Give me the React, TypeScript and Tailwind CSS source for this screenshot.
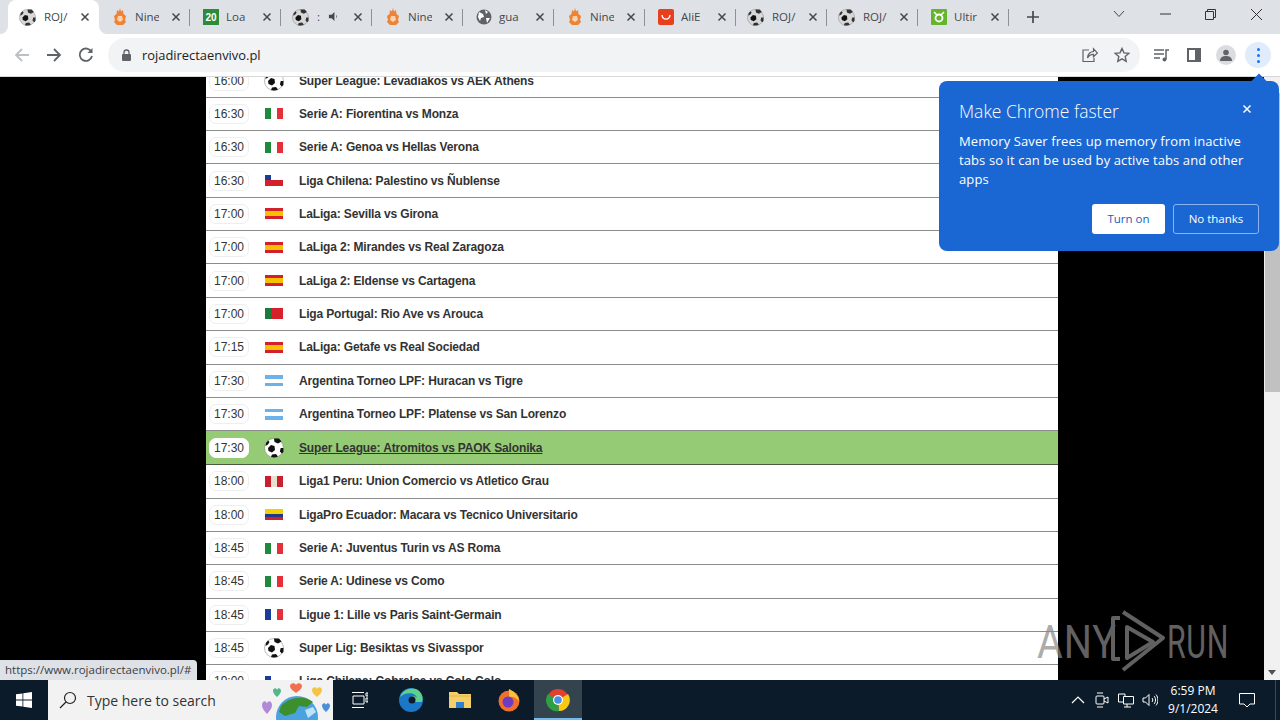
import React from "react";

const Ball = ({ s = 16, dark = false }: { s?: number; dark?: boolean }) => (
  <svg width={s} height={s} viewBox="0 0 20 20" className="shrink-0">
    <circle cx="10" cy="10" r="9.5" fill={dark ? "#d8d8d8" : "#fff"} stroke="#777" strokeWidth="0.5" />
    <path d="M4 10l3-3 3.500 1 .5 4-3 2.500-3.500-1.500z" fill="#111" />
    <path d="M10 .6l5 0 2.500 3-3.500 2-3.500-1.500zM2 5l2-2.500 1.500 1.500-1.500 2.500-2.500 1.500zM19.400 10v4l-1.500 1.500-2-2 .8-3.500zM7 19l1-2.500 4 -.5 2 2.500a9.500 9.500 0 0 1-7 .5z" fill={dark ? "#333" : "#111"} />
  </svg>
);

const Flag = ({ c }: { c: string }) => {
  const base = "w-[18px] h-[11px] shrink-0 overflow-hidden flex";
  if (c === "it") return <div className={base}><div className="flex-1 bg-[#1d8a3c]" /><div className="flex-1 bg-white" /><div className="flex-1 bg-[#e5303a]" /></div>;
  if (c === "es") return <div className={base + " flex-col"}><div className="h-[3px] bg-[#d4202a]" /><div className="flex-1 bg-[#f7c000]" /><div className="h-[3px] bg-[#d4202a]" /></div>;
  if (c === "fr") return <div className={base}><div className="flex-1 bg-[#1a3d9c]" /><div className="flex-1 bg-white" /><div className="flex-1 bg-[#e5303a]" /></div>;
  if (c === "pe") return <div className={base}><div className="flex-1 bg-[#c8202c]" /><div className="flex-1 bg-[#e8e0d0]" /><div className="flex-1 bg-[#c8202c]" /></div>;
  if (c === "ar") return <div className={base + " flex-col"}><div className="flex-1 bg-[#6cb2ea]" /><div className="flex-1 bg-white" /><div className="flex-1 bg-[#6cb2ea]" /></div>;
  if (c === "ec") return <div className={base + " flex-col"}><div className="h-[5px] bg-[#f5d000]" /><div className="h-[3px] bg-[#20388c]" /><div className="h-[3px] bg-[#d0202c]" /></div>;
  if (c === "pt") return <div className={base}><div className="w-[7px] bg-[#1a7a3c]" /><div className="flex-1 bg-[#d8202c]" /></div>;
  if (c === "cl") return (
    <div className={base + " flex-col relative"}>
      <div className="h-[5px] bg-white" /><div className="flex-1 bg-[#d4202a]" />
      <div className="absolute left-0 top-0 w-[6px] h-[5px] bg-[#1a3d9c]" />
    </div>
  );
  return <Ball s={20} />;
};

const rows: [string, string, string][] = [
  ["16:00", "b", "Super League: Levadiakos vs AEK Athens"],
  ["16:30", "it", "Serie A: Fiorentina vs Monza"],
  ["16:30", "it", "Serie A: Genoa vs Hellas Verona"],
  ["16:30", "cl", "Liga Chilena: Palestino vs Ñublense"],
  ["17:00", "es", "LaLiga: Sevilla vs Girona"],
  ["17:00", "es", "LaLiga 2: Mirandes vs Real Zaragoza"],
  ["17:00", "es", "LaLiga 2: Eldense vs Cartagena"],
  ["17:00", "pt", "Liga Portugal: Rio Ave vs Arouca"],
  ["17:15", "es", "LaLiga: Getafe vs Real Sociedad"],
  ["17:30", "ar", "Argentina Torneo LPF: Huracan vs Tigre"],
  ["17:30", "ar", "Argentina Torneo LPF: Platense vs San Lorenzo"],
  ["17:30", "b", "Super League: Atromitos vs PAOK Salonika"],
  ["18:00", "pe", "Liga1 Peru: Union Comercio vs Atletico Grau"],
  ["18:00", "ec", "LigaPro Ecuador: Macara vs Tecnico Universitario"],
  ["18:45", "it", "Serie A: Juventus Turin vs AS Roma"],
  ["18:45", "it", "Serie A: Udinese vs Como"],
  ["18:45", "fr", "Ligue 1: Lille vs Paris Saint-Germain"],
  ["18:45", "b", "Super Lig: Besiktas vs Sivasspor"],
  ["19:00", "cl", "Liga Chilena: Cobreloa vs Colo Colo"],
];

const Row = ({ t, f, n, i }: { t: string; f: string; n: string; i: number }) => {
  const hi = i === 11;
  return (
    <div className={
      "flex items-center border-b shrink-0 " +
      (hi ? "h-[34px] bg-[#95cb75] border-[#4a5a40]" : "h-[33.35px] bg-white border-[#8c8c8c]")
    }>
      <div className={"ml-[3px] w-[40px] h-[20px] rounded-[7px] border flex items-center justify-center text-[12px] text-[#333] " + (hi ? "bg-white border-white" : "bg-white border-[#eeeeee]")}>{t}</div>
      <div className="ml-[15px] w-[20px] flex justify-center"><Flag c={f} /></div>
      <div className={"ml-[15px] text-[12px] tracking-[-0.15px] font-bold text-[#333] " + (hi ? "underline" : "")}>{n}</div>
    </div>
  );
};

const X = ({ c = "#45484d" }: { c?: string }) => (
  <svg width="10" height="10" viewBox="0 0 10 10" className="shrink-0">
    <path d="M1.500 1.500l7 7M8.500 1.500l-7 7" stroke={c} strokeWidth="1.500" />
  </svg>
);

const Nine = () => (
  <svg width="16" height="18" viewBox="0 0 16 18" className="shrink-0">
    <path d="M8 0l1 3.500L11 2l.5 4L14 8l-1 4 1 2-3 3H5l-3-3 1-2-1-4 2.500-2L5 2l2 1.500z" fill="#ee8235" />
    <path d="M6 8h4l1 4-3 2-3-2z" fill="#f9d2b0" />
  </svg>
);

const Fav = ({ k }: { k: string }) => {
  if (k === "b") return <Ball s={17} dark />;
  if (k === "n") return <Nine />;
  if (k === "20") return <div className="w-[16px] h-[16px] bg-[#2e8b3c] text-white text-[10px] font-bold flex items-center justify-center shrink-0 font-['Liberation_Sans',sans-serif]">20</div>;
  if (k === "g") return (
    <svg width="16" height="16" viewBox="0 0 16 16" className="shrink-0">
      <circle cx="8" cy="8" r="7.500" fill="#5f6368" />
      <path d="M3 3l4 2 1 3-3 1-1 3-2-4zM9 1l3 2-2 2zM10 9l4 0-3 5z" fill="#fff" />
    </svg>
  );
  if (k === "a") return (
    <svg width="16" height="16" viewBox="0 0 16 16" className="shrink-0">
      <rect width="16" height="16" rx="2" fill="#e8401c" />
      <path d="M4 6c.5 5.500 7.500 5.500 8 0" fill="none" stroke="#fff" strokeWidth="1.400" />
    </svg>
  );
  return (
    <svg width="16" height="16" viewBox="0 0 16 16" className="shrink-0">
      <rect width="16" height="16" rx="1" fill="#66b32e" />
      <circle cx="8" cy="9" r="3.500" fill="none" stroke="#fff" strokeWidth="1.800" />
      <path d="M3 3l3 3M13 3l-3 3" stroke="#fff" strokeWidth="1.500" />
    </svg>
  );
};

const tabs: { k: string; t: string }[] = [
  { k: "b", t: "ROJ/" },
  { k: "n", t: "Nine" },
  { k: "20", t: "Loa" },
  { k: "b", t: ":" },
  { k: "n", t: "Nine" },
  { k: "g", t: "gua" },
  { k: "n", t: "Nine" },
  { k: "a", t: "AliE" },
  { k: "b", t: "ROJ/" },
  { k: "b", t: "ROJ/" },
  { k: "u", t: "Ultir" },
];

const TabStrip = () => (
  <div className="h-[34px] bg-[#dee1e6] flex items-stretch pl-[8px] shrink-0 font-['Open_Sans',sans-serif]">
    {tabs.map((tb, i) => (
      <div key={i} className={"w-[91px] shrink-0 flex items-center pr-[9px] relative " + (tb.k === "b" ? "pl-[11px] " : "pl-[13px] ") + (i === 0 ? "bg-white rounded-t-[8px]" : "")}>
        {i === 0 && (
          <>
            <div className="absolute -left-[8px] bottom-0 w-[8px] h-[8px] bg-white"><div className="w-full h-full bg-[#dee1e6] rounded-br-[8px]" /></div>
            <div className="absolute -right-[8px] bottom-0 w-[8px] h-[8px] bg-white"><div className="w-full h-full bg-[#dee1e6] rounded-bl-[8px]" /></div>
          </>
        )}
        <Fav k={tb.k} />
        <span className={(tb.k === "b" ? "ml-[8px] " : "ml-[7px] ") + "text-[11.500px] text-[#45484d] w-[24px] overflow-hidden whitespace-nowrap"}>{tb.t}</span>
        {i === 3 && (
          <svg width="11" height="11" viewBox="0 0 12 12" className="absolute left-[47px] top-[11px]">
            <path d="M1 4h3l3-3v10L4 8H1zM9 4c1 1 1 3 0 4" fill="#45484d" />
          </svg>
        )}
        <span className="ml-auto"><X /></span>
        {i > 0 && <span className="absolute right-0 top-[9px] h-[17px] w-px bg-[#8e9196]" />}
      </div>
    ))}
    <div className="w-[36px] flex items-center justify-center ml-[6px]">
      <svg width="14" height="14" viewBox="0 0 14 14"><path d="M7 1v12M1 7h12" stroke="#45484d" strokeWidth="1.700" /></svg>
    </div>
    <div className="ml-auto flex items-center text-[#3c3c3c]">
      <svg width="12" height="8" viewBox="0 0 12 8" className="mr-[35px] -mt-[6px]"><path d="M1 1l5 5.500L11 1" fill="none" stroke="#45484d" strokeWidth="1" /></svg>
      <svg width="11" height="2" viewBox="0 0 11 2" className="mr-[34px] -mt-[6px]"><path d="M0 1h11" stroke="#333" strokeWidth="1" /></svg>
      <svg width="11" height="11" viewBox="0 0 11 11" className="mr-[34px] -mt-[6px]"><path d="M.5 2.500h8v8h-8zM2.500 2.500v-2h8v8h-2" fill="none" stroke="#333" strokeWidth="1" /></svg>
      <svg width="13" height="13" viewBox="0 0 13 13" className="mr-[17px] -mt-[6px]"><path d="M1 1l11 11M12 1L1 12" stroke="#333" strokeWidth="1" /></svg>
    </div>
  </div>
);

const Toolbar = () => (
  <div className="h-[42px] bg-white flex items-center shrink-0 border-b border-[#d8d8d8] box-content font-['Open_Sans',sans-serif]">
    <svg width="16" height="16" viewBox="0 0 16 16" className="ml-[14px]"><path d="M15 8H2M8 2L2 8l6 6" fill="none" stroke="#bcbfc3" strokeWidth="1.800" /></svg>
    <svg width="16" height="16" viewBox="0 0 16 16" className="ml-[16px]"><path d="M1 8h13M8 2l6 6-6 6" fill="none" stroke="#5f6368" strokeWidth="1.800" /></svg>
    <svg width="16" height="16" viewBox="0 0 16 16" className="ml-[16px]"><path d="M13.500 5A6.200 6.200 0 1 0 14 9" fill="none" stroke="#5f6368" strokeWidth="1.800" /><path d="M14.500 1v5h-5z" fill="#5f6368" /></svg>
    <div className="ml-[14px] w-[1032px] h-[34px] rounded-full bg-[#f1f3f4] flex items-center pl-[13px] pr-[10px]">
      <svg width="11" height="13" viewBox="0 0 11 13"><rect x="1" y="5" width="9" height="7" rx="1" fill="#5f6368" /><path d="M3 5V3.500a2.500 2.500 0 0 1 5 0V5" fill="none" stroke="#5f6368" strokeWidth="1.300" /></svg>
      <span className="ml-[10px] mt-[1px] text-[12.900px] text-[#202124]">rojadirectaenvivo.pl</span>
      <svg width="16" height="16" viewBox="0 0 16 16" className="ml-auto mr-[16px]"><path d="M7 3H1v11.500h11V11" fill="none" stroke="#5f6368" strokeWidth="1.200" /><path d="M5.500 11c0-4 3-6.500 6-6.500V1.800L15.500 6l-4 3.800V7.300C9 7.300 6.800 8.500 5.500 11z" fill="none" stroke="#5f6368" strokeWidth="1.200" /></svg>
      <svg width="16" height="16" viewBox="0 0 16 16"><path d="M8 1.500l2 4.400 4.800.5-3.600 3.200 1 4.700L8 11.900l-4.200 2.400 1-4.700L1.200 6.400 6 5.900z" fill="none" stroke="#5f6368" strokeWidth="1.400" /></svg>
    </div>
    <svg width="17" height="16" viewBox="0 0 17 16" className="ml-[13px]"><path d="M1 3h10M1 7h10M1 11h6" stroke="#5f6368" strokeWidth="1.500" /><path d="M13 12V3h3" fill="none" stroke="#5f6368" strokeWidth="1.500" /><circle cx="11.500" cy="12.500" r="2" fill="#5f6368" /></svg>
    <svg width="14" height="14" viewBox="0 0 14 14" className="ml-[17px]"><rect x="1" y="1" width="12" height="12" fill="none" stroke="#5f6368" strokeWidth="2" /><rect x="8" y="1" width="5" height="12" fill="#5f6368" /></svg>
    <div className="ml-[15px] w-[20px] h-[20px] rounded-full bg-[#dadce0] flex items-center justify-center">
      <svg width="12" height="12" viewBox="0 0 12 12"><circle cx="6" cy="3.500" r="2.800" fill="#5f6368" /><path d="M0 12c0-4 3-5 6-5s6 1 6 5z" fill="#5f6368" /></svg>
    </div>
    <div className="ml-[9px] w-[26px] h-[26px] rounded-full bg-[#e0ecfb] flex flex-col items-center justify-center gap-[3px]">
      <span className="w-[3px] h-[3px] rounded-full bg-[#1a73e8]" /><span className="w-[3px] h-[3px] rounded-full bg-[#1a73e8]" /><span className="w-[3px] h-[3px] rounded-full bg-[#1a73e8]" />
    </div>
  </div>
);

const Bubble = () => (
  <div className="absolute left-[939px] top-[81px] w-[340px] h-[170px] rounded-[8px] bg-[#1a66d2] text-white font-['Open_Sans',sans-serif] pl-[20px] pr-[20px] pt-[19px]">
    <div className="absolute -top-[5px] left-[314px] w-[12px] h-[12px] bg-[#1a66d2] rotate-45" />
    <div className="text-[17.500px] leading-[22px] font-light">Make Chrome faster</div>
    <div className="absolute right-[27px] top-[23px]"><X c="#fff" /></div>
    <div className="mt-[10px] text-[13px] tracking-[0.1px] leading-[19px] w-[292px]">Memory Saver frees up memory from inactive tabs so it can be used by active tabs and other apps</div>
    <div className="flex justify-end gap-[8px] mt-[15px]">
      <div className="w-[73px] h-[30px] rounded-[3px] bg-white text-[#1a5bb8] text-[11.500px] flex items-center justify-center">Turn on</div>
      <div className="w-[86px] h-[30px] rounded-[3px] border border-[#8ab4f0] text-white text-[11.500px] flex items-center justify-center">No thanks</div>
    </div>
  </div>
);

const Watermark = () => (
  <div className="absolute left-[1037px] top-[608px] flex items-center text-[#8a8a8a] opacity-70 font-['Roboto',sans-serif]">
    <span className="mt-[3px] text-[46px] leading-none scale-x-[.86] origin-left w-[72px] tracking-[1px]">ANY</span>
    <svg width="62" height="64" viewBox="0 0 62 64" className="-ml-[1px]">
      <path d="M12 10H5v41h7" fill="none" stroke="#8a8a8a" strokeWidth="4" strokeLinejoin="round" />
      <path d="M15 4l40 26-40 32" fill="none" stroke="#8a8a8a" strokeWidth="4" strokeLinejoin="round" />
      <path d="M19 19l26 15-26 16z" fill="none" stroke="#8a8a8a" strokeWidth="4" strokeLinejoin="round" />
    </svg>
    <span className="mt-[3px] -ml-[3px] text-[46px] leading-none scale-x-[.66] origin-left w-[62px] tracking-[1px]">RUN</span>
  </div>
);

const Page = () => (
  <div className="relative flex-1 bg-black overflow-hidden flex">
    <div className="w-[206px] shrink-0" />
    <div className="w-[852px] shrink-0 bg-white font-['Liberation_Sans',sans-serif] flex flex-col -mt-[12.600px]">
      {rows.map((r, i) => <Row key={i} t={r[0]} f={r[1]} n={r[2]} i={i} />)}
    </div>
    <div className="flex-1" />
    <div className="w-[16px] bg-[#f1f1f1] flex flex-col items-center shrink-0">
      <div className="h-[16px]" />
      <div className="w-[15px] h-[299px] bg-[#c1c1c1]" />
      <div className="mt-auto h-[16px] flex items-center">
        <div className="w-0 h-0 border-l-[4px] border-r-[4px] border-t-[5px] border-l-transparent border-r-transparent border-t-[#505050]" />
      </div>
    </div>
    <div className="absolute left-0 bottom-0 w-[197px] h-[20px] bg-[#dee1e6] rounded-tr-[4px] text-[11.500px] text-[#3c4043] pl-[5px] flex items-center font-['Open_Sans',sans-serif]">https://www.rojadirectaenvivo.pl/#</div>
  </div>
);

const heart = "M0 3C0 0 4-1 5 2 6-1 10 0 10 3 10 6 7 8 5 10 3 8 0 6 0 3z";

const Taskbar = () => (
  <div className="h-[40px] shrink-0 bg-[#0b1b29] flex items-stretch text-white font-['Open_Sans',sans-serif] relative">
    <div className="w-[48px] flex items-center justify-center">
      <svg width="16" height="16" viewBox="0 0 16 16"><path d="M0 2.300l6.500-.9v6.200H0zM7.300 1.300L16 0v7.600H7.300zM0 8.400h6.500v6.200L0 13.700zM7.300 8.400H16V16l-8.700-1.200z" fill="#fff" /></svg>
    </div>
    <div className="w-[285px] bg-[#f2f2f2] flex items-center relative overflow-hidden">
      <svg width="18" height="18" viewBox="0 0 18 18" className="ml-[11px]"><circle cx="11" cy="7" r="5.500" fill="none" stroke="#222" strokeWidth="1.200" /><path d="M7 11l-6 6" stroke="#222" strokeWidth="1.200" /></svg>
      <span className="ml-[10px] text-[14px] text-[#333]">Type here to search</span>
      <svg width="76" height="40" viewBox="0 0 76 40" className="absolute right-0 top-0">
        <circle cx="40" cy="37" r="21" fill="#4aa3df" />
        <path d="M24 26c6-8 24-12 32-4l-6 5-8-1-4 7-10 3-6-4z" fill="#3d8f2e" />
        <path d="M48 30l8-3 3 5-8 6z" fill="#bfe3f5" />
        <path d={heart} transform="translate(5 21) scale(1 1.300)" fill="#b08ad8" />
        <path d={heart} transform="translate(16 8) scale(.8 .9)" fill="#52b788" />
        <path d={heart} transform="translate(33 3) scale(1.200 1)" fill="#f07050" />
        <path d={heart} transform="translate(55 7) scale(1 1)" fill="#f4c542" />
        <path d={heart} transform="translate(65 23) scale(.8 .9)" fill="#4a90d9" />
      </svg>
    </div>
    <div className="w-[54px] flex items-center justify-center">
      <svg width="16" height="16" viewBox="0 0 16 16"><path d="M0 .5h12M0 15.500h12M1 4h11v8H1zM14 1h2v3h-2zM14 6h2v4h-2z" fill="none" stroke="#fff" strokeWidth="1" /></svg>
    </div>
    <div className="w-[48px] flex items-center justify-center">
      <svg width="26" height="26" viewBox="0 0 26 26">
        <circle cx="13" cy="13" r="12" fill="#1b78c8" />
        <path d="M2 10C4 3 12 0 18 2c5 2 8 8 6 13h-9c-2 0-3-1-3-3 0-3 5-4 7-1-1-5-10-7-17-1z" fill="#5fd08a" />
        <circle cx="14" cy="13" r="3.500" fill="#0b1b29" />
      </svg>
    </div>
    <div className="w-[49px] flex items-center justify-center">
      <svg width="24" height="20" viewBox="0 0 24 20"><path d="M1 2h8l2 2h12v14H1z" fill="#f5cf6a" /><rect x="8" y="12" width="8" height="6" fill="#2f7fcf" /><path d="M1 6h22" stroke="#e8b840" /></svg>
    </div>
    <div className="w-[50px] flex items-center justify-center">
      <svg width="24" height="24" viewBox="0 0 24 24"><circle cx="12" cy="13" r="10.500" fill="#f0702a" /><path d="M12 1c4 2 9 5 10 12-3-3-6-5-10-4z" fill="#f9c23c" /><circle cx="11" cy="14" r="5.500" fill="#6d3bc4" /></svg>
    </div>
    <div className="w-[48px] bg-[#34444f] flex items-center justify-center relative">
      <svg width="24" height="24" viewBox="0 0 24 24"><circle cx="12" cy="12" r="11" fill="#e2412f" /><path d="M12 12L22 6a11 11 0 0 1-9 17z" fill="#f9c916" /><path d="M12 12l1 11A11 11 0 0 1 2 6z" fill="#2f9e44" /><circle cx="12" cy="12" r="5" fill="#fff" /><circle cx="12" cy="12" r="3.800" fill="#4a90e2" /></svg>
      <div className="absolute bottom-0 left-0 right-0 h-[2px] bg-[#76b9ed]" />
    </div>
    <div className="ml-auto flex items-center">
      <svg width="14" height="8" viewBox="0 0 14 8" className="mr-[10px]"><path d="M1 7l6-6 6 6" fill="none" stroke="#fff" strokeWidth="1.200" /></svg>
      <svg width="14" height="18" viewBox="0 0 14 18" className="mr-[9px]"><rect x="1" y="5" width="8" height="8" rx="1" fill="none" stroke="#fff" /><path d="M9 8l4-2v6l-4-2M2 2h6M2 16h6" fill="none" stroke="#fff" /></svg>
      <svg width="16" height="15" viewBox="0 0 16 15" className="mr-[8px]"><path d="M5.500 3.500H15.500V11H5.500zM.5 1H7v3M.5 1v8H5M9 11v3M6 14h7" fill="none" stroke="#fff" /></svg>
      <svg width="16" height="14" viewBox="0 0 16 14" className="mr-[1px]"><path d="M1 5h2.500L7 1.500v11L3.500 9H1zM10 5c1 1 1 3 0 4M12 3c2 2 2 6 0 8M14 1.500c2.500 3 2.500 8 0 11" fill="none" stroke="#fff" /></svg>
      <div className="w-[68px] text-[12px] leading-[18px] text-center">
        <div>6:59 PM</div>
        <div>9/1/2024</div>
      </div>
      <svg width="16" height="15" viewBox="0 0 16 15" className="ml-[12px] mr-[25px]"><path d="M.5.500h15v10.500H11l-3 3-3-3H.5z" fill="none" stroke="#fff" /></svg>
    </div>
    <div className="absolute right-[4px] top-0 bottom-0 w-px bg-[#3a4854]" />
  </div>
);

export default function App() {
  return (
    <div className="relative w-[1280px] h-[720px] overflow-hidden flex flex-col">
      <TabStrip />
      <Toolbar />
      <Page />
      <Taskbar />
      <Bubble />
      <Watermark />
    </div>
  );
}
